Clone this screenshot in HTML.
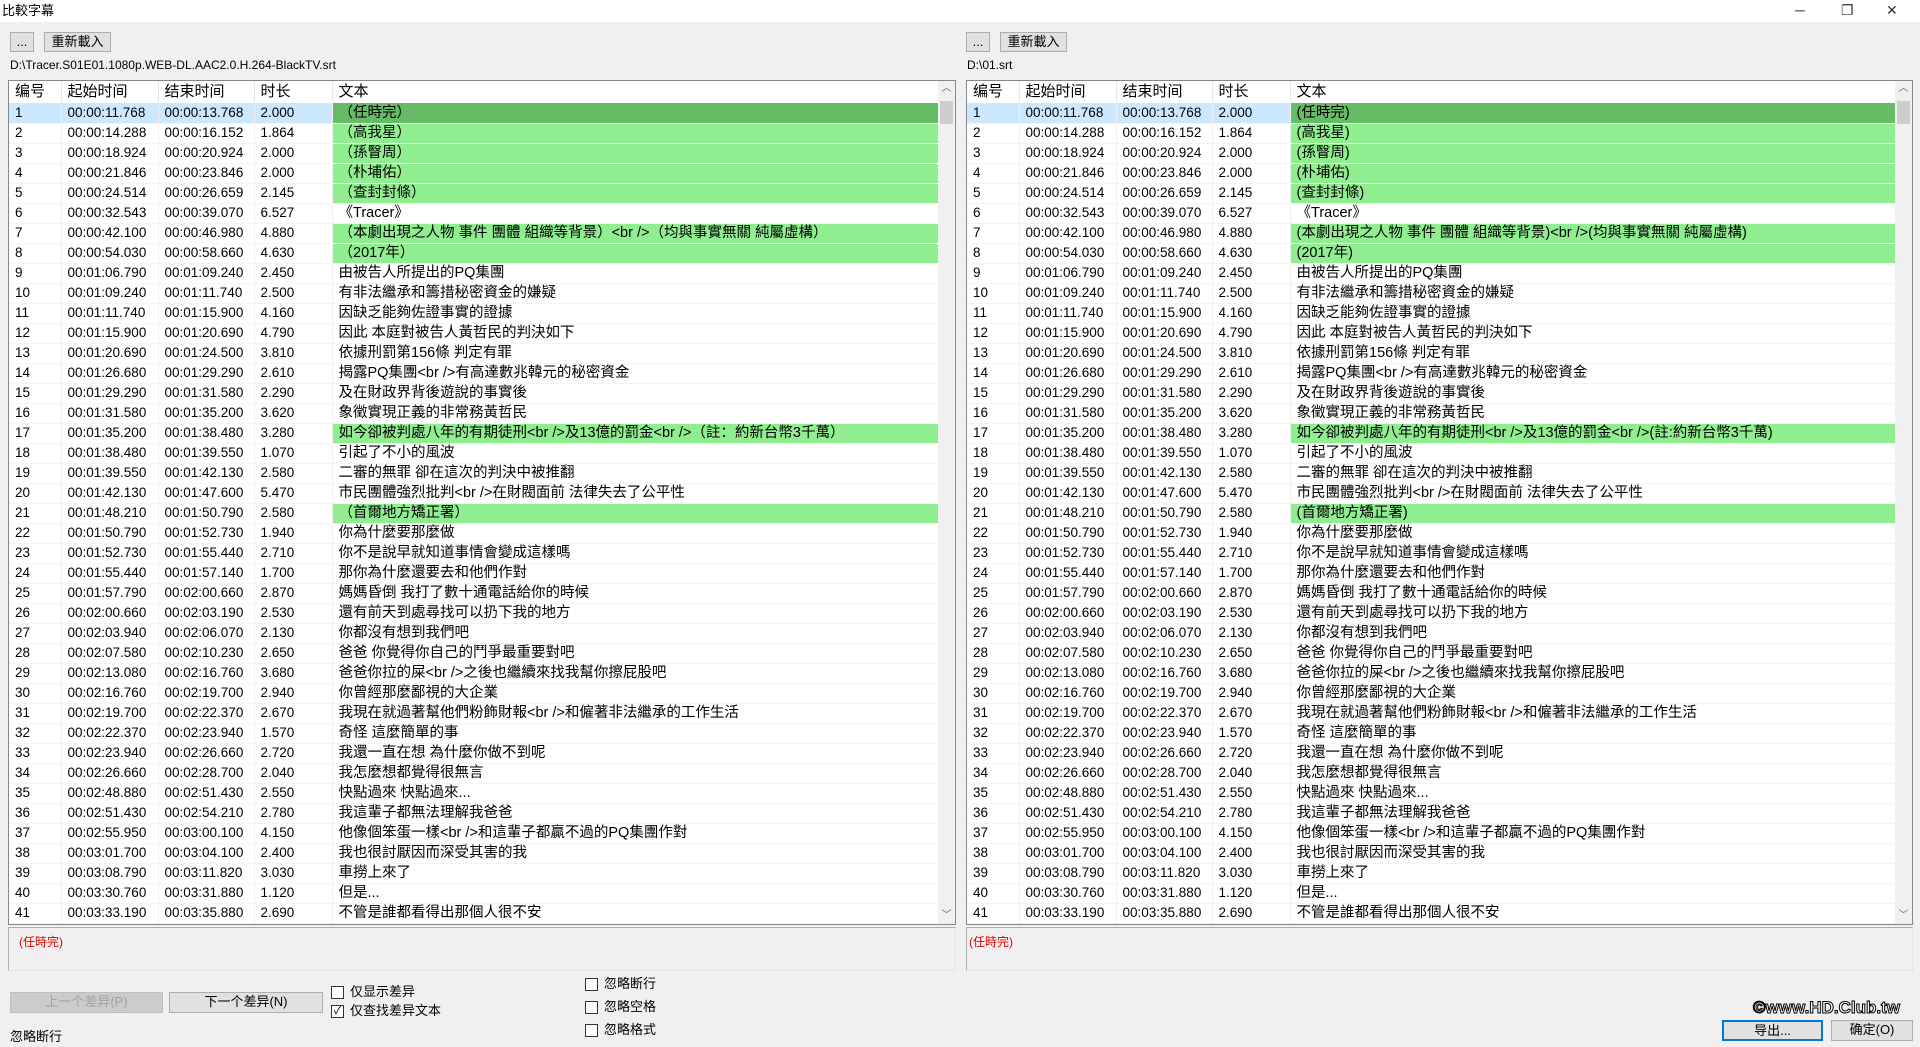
<!DOCTYPE html>
<html><head><meta charset="utf-8">
<style>
*{box-sizing:border-box;margin:0;padding:0}
body{width:1920px;height:1047px;background:#f0f0f0;font-family:"Liberation Sans","Noto Sans CJK SC",sans-serif;font-size:13px;line-height:16px;color:#000;position:relative;overflow:hidden}
.abs{position:absolute}
.title{left:0;top:0;width:1920px;height:22px;background:#fff;font-size:13px;padding:3px 0 0 2px}
.wc{top:2px;font-size:14px;color:#333}
.btn{background:#e1e1e1;border:1px solid #adadad;text-align:center;font-size:13px;line-height:18px}
.path{font-size:12px}
.tbl{background:#fff;border:1px solid #828790;overflow:hidden}
table{border-collapse:collapse;table-layout:fixed;position:absolute;left:0;top:0}
th{height:22px;line-height:20px;font-weight:normal;text-align:left;font-size:15px;padding:0 0 0 6px;border-right:1px solid #e5e5e5;background:#fff}
tr{height:20px}
td{height:20px;line-height:18px;padding:0 0 0 6px;white-space:nowrap;overflow:hidden;border-right:1px solid #f0f0f0;border-bottom:1px solid #f4f4f4;font-size:13.5px}
td:last-child{font-size:14.5px}
tr.s td{background:#cce8ff}
tr.s td:last-child{background:#66bb66}
tr.g td:last-child{background:#90ee90}
.sb{top:0;right:0;width:17px;height:100%;background:#f0f0f0}
.sb .th{position:absolute;left:2px;top:20px;width:13px;height:23px;background:#cdcdcd}
.box{background:#f0f0f0;border:1px solid #abadb3;border-right-color:#e3e3e3;border-bottom-color:#e3e3e3}
.red{color:#d00;font-size:12px}
.cb{width:13px;height:13px;border:1px solid #333;background:#fff;display:inline-block;vertical-align:middle;margin-right:6px;font-size:11px;line-height:11px;text-align:center}
.lbl{font-size:13px}
</style></head><body>
<div class="abs title">比較字幕</div>
<div class="abs wc" style="left:1795px">─</div>
<div class="abs wc" style="left:1841px">❐</div>
<div class="abs wc" style="left:1886px">✕</div>

<div class="abs btn" style="left:10px;top:32px;width:24px;height:20px">...</div>
<div class="abs btn" style="left:44px;top:32px;width:67px;height:20px">重新載入</div>
<div class="abs path" style="left:10px;top:57px">D:\Tracer.S01E01.1080p.WEB-DL.AAC2.0.H.264-BlackTV.srt</div>

<div class="abs btn" style="left:966px;top:32px;width:24px;height:20px">...</div>
<div class="abs btn" style="left:1000px;top:32px;width:67px;height:20px">重新載入</div>
<div class="abs path" style="left:967px;top:57px">D:\01.srt</div>

<div class="abs tbl" style="left:8px;top:80px;width:948px;height:845px">
<table style="width:930px"><colgroup><col style="width:52px"><col style="width:97px"><col style="width:96px"><col style="width:78px"><col style="width:607px"></colgroup>
<tr><th>编号</th><th>起始时间</th><th>结束时间</th><th>时长</th><th>文本</th></tr>
<tr class="s"><td>1</td><td>00:00:11.768</td><td>00:00:13.768</td><td>2.000</td><td>（任時完）</td></tr>
<tr class="g"><td>2</td><td>00:00:14.288</td><td>00:00:16.152</td><td>1.864</td><td>（高我星）</td></tr>
<tr class="g"><td>3</td><td>00:00:18.924</td><td>00:00:20.924</td><td>2.000</td><td>（孫瞖周）</td></tr>
<tr class="g"><td>4</td><td>00:00:21.846</td><td>00:00:23.846</td><td>2.000</td><td>（朴埔佑）</td></tr>
<tr class="g"><td>5</td><td>00:00:24.514</td><td>00:00:26.659</td><td>2.145</td><td>（查封封條）</td></tr>
<tr><td>6</td><td>00:00:32.543</td><td>00:00:39.070</td><td>6.527</td><td>《Tracer》</td></tr>
<tr class="g"><td>7</td><td>00:00:42.100</td><td>00:00:46.980</td><td>4.880</td><td>（本劇出現之人物 事件 團體 組織等背景）&lt;br /&gt;（均與事實無關 純屬虛構）</td></tr>
<tr class="g"><td>8</td><td>00:00:54.030</td><td>00:00:58.660</td><td>4.630</td><td>（2017年）</td></tr>
<tr><td>9</td><td>00:01:06.790</td><td>00:01:09.240</td><td>2.450</td><td>由被告人所提出的PQ集團</td></tr>
<tr><td>10</td><td>00:01:09.240</td><td>00:01:11.740</td><td>2.500</td><td>有非法繼承和籌措秘密資金的嫌疑</td></tr>
<tr><td>11</td><td>00:01:11.740</td><td>00:01:15.900</td><td>4.160</td><td>因缺乏能夠佐證事實的證據</td></tr>
<tr><td>12</td><td>00:01:15.900</td><td>00:01:20.690</td><td>4.790</td><td>因此 本庭對被告人黃哲民的判決如下</td></tr>
<tr><td>13</td><td>00:01:20.690</td><td>00:01:24.500</td><td>3.810</td><td>依據刑罰第156條 判定有罪</td></tr>
<tr><td>14</td><td>00:01:26.680</td><td>00:01:29.290</td><td>2.610</td><td>揭露PQ集團&lt;br /&gt;有高達數兆韓元的秘密資金</td></tr>
<tr><td>15</td><td>00:01:29.290</td><td>00:01:31.580</td><td>2.290</td><td>及在財政界背後遊說的事實後</td></tr>
<tr><td>16</td><td>00:01:31.580</td><td>00:01:35.200</td><td>3.620</td><td>象徵實現正義的非常務黃哲民</td></tr>
<tr class="g"><td>17</td><td>00:01:35.200</td><td>00:01:38.480</td><td>3.280</td><td>如今卻被判處八年的有期徒刑&lt;br /&gt;及13億的罰金&lt;br /&gt;（註：約新台幣3千萬）</td></tr>
<tr><td>18</td><td>00:01:38.480</td><td>00:01:39.550</td><td>1.070</td><td>引起了不小的風波</td></tr>
<tr><td>19</td><td>00:01:39.550</td><td>00:01:42.130</td><td>2.580</td><td>二審的無罪 卻在這次的判決中被推翻</td></tr>
<tr><td>20</td><td>00:01:42.130</td><td>00:01:47.600</td><td>5.470</td><td>市民團體強烈批判&lt;br /&gt;在財閥面前 法律失去了公平性</td></tr>
<tr class="g"><td>21</td><td>00:01:48.210</td><td>00:01:50.790</td><td>2.580</td><td>（首爾地方矯正署）</td></tr>
<tr><td>22</td><td>00:01:50.790</td><td>00:01:52.730</td><td>1.940</td><td>你為什麼要那麼做</td></tr>
<tr><td>23</td><td>00:01:52.730</td><td>00:01:55.440</td><td>2.710</td><td>你不是說早就知道事情會變成這樣嗎</td></tr>
<tr><td>24</td><td>00:01:55.440</td><td>00:01:57.140</td><td>1.700</td><td>那你為什麼還要去和他們作對</td></tr>
<tr><td>25</td><td>00:01:57.790</td><td>00:02:00.660</td><td>2.870</td><td>媽媽昏倒 我打了數十通電話給你的時候</td></tr>
<tr><td>26</td><td>00:02:00.660</td><td>00:02:03.190</td><td>2.530</td><td>還有前天到處尋找可以扔下我的地方</td></tr>
<tr><td>27</td><td>00:02:03.940</td><td>00:02:06.070</td><td>2.130</td><td>你都沒有想到我們吧</td></tr>
<tr><td>28</td><td>00:02:07.580</td><td>00:02:10.230</td><td>2.650</td><td>爸爸 你覺得你自己的鬥爭最重要對吧</td></tr>
<tr><td>29</td><td>00:02:13.080</td><td>00:02:16.760</td><td>3.680</td><td>爸爸你拉的屎&lt;br /&gt;之後也繼續來找我幫你擦屁股吧</td></tr>
<tr><td>30</td><td>00:02:16.760</td><td>00:02:19.700</td><td>2.940</td><td>你曾經那麼鄙視的大企業</td></tr>
<tr><td>31</td><td>00:02:19.700</td><td>00:02:22.370</td><td>2.670</td><td>我現在就過著幫他們粉飾財報&lt;br /&gt;和僱著非法繼承的工作生活</td></tr>
<tr><td>32</td><td>00:02:22.370</td><td>00:02:23.940</td><td>1.570</td><td>奇怪 這麼簡單的事</td></tr>
<tr><td>33</td><td>00:02:23.940</td><td>00:02:26.660</td><td>2.720</td><td>我還一直在想 為什麼你做不到呢</td></tr>
<tr><td>34</td><td>00:02:26.660</td><td>00:02:28.700</td><td>2.040</td><td>我怎麼想都覺得很無言</td></tr>
<tr><td>35</td><td>00:02:48.880</td><td>00:02:51.430</td><td>2.550</td><td>快點過來 快點過來...</td></tr>
<tr><td>36</td><td>00:02:51.430</td><td>00:02:54.210</td><td>2.780</td><td>我這輩子都無法理解我爸爸</td></tr>
<tr><td>37</td><td>00:02:55.950</td><td>00:03:00.100</td><td>4.150</td><td>他像個笨蛋一樣&lt;br /&gt;和這輩子都贏不過的PQ集團作對</td></tr>
<tr><td>38</td><td>00:03:01.700</td><td>00:03:04.100</td><td>2.400</td><td>我也很討厭因而深受其害的我</td></tr>
<tr><td>39</td><td>00:03:08.790</td><td>00:03:11.820</td><td>3.030</td><td>車撈上來了</td></tr>
<tr><td>40</td><td>00:03:30.760</td><td>00:03:31.880</td><td>1.120</td><td>但是...</td></tr>
<tr><td>41</td><td>00:03:33.190</td><td>00:03:35.880</td><td>2.690</td><td>不管是誰都看得出那個人很不安</td></tr>
</table>
<div class="abs sb"><div style="text-align:center;font-size:10px;color:#606060">︿</div><div class="th"></div><div style="position:absolute;bottom:0;width:17px;text-align:center;font-size:10px;color:#606060">﹀</div></div>
</div>

<div class="abs tbl" style="left:966px;top:80px;width:947px;height:845px">
<table style="width:929px"><colgroup><col style="width:52px"><col style="width:97px"><col style="width:96px"><col style="width:78px"><col style="width:606px"></colgroup>
<tr><th>编号</th><th>起始时间</th><th>结束时间</th><th>时长</th><th>文本</th></tr>
<tr class="s"><td>1</td><td>00:00:11.768</td><td>00:00:13.768</td><td>2.000</td><td>(任時完)</td></tr>
<tr class="g"><td>2</td><td>00:00:14.288</td><td>00:00:16.152</td><td>1.864</td><td>(高我星)</td></tr>
<tr class="g"><td>3</td><td>00:00:18.924</td><td>00:00:20.924</td><td>2.000</td><td>(孫瞖周)</td></tr>
<tr class="g"><td>4</td><td>00:00:21.846</td><td>00:00:23.846</td><td>2.000</td><td>(朴埔佑)</td></tr>
<tr class="g"><td>5</td><td>00:00:24.514</td><td>00:00:26.659</td><td>2.145</td><td>(查封封條)</td></tr>
<tr><td>6</td><td>00:00:32.543</td><td>00:00:39.070</td><td>6.527</td><td>《Tracer》</td></tr>
<tr class="g"><td>7</td><td>00:00:42.100</td><td>00:00:46.980</td><td>4.880</td><td>(本劇出現之人物 事件 團體 組織等背景)&lt;br /&gt;(均與事實無關 純屬虛構)</td></tr>
<tr class="g"><td>8</td><td>00:00:54.030</td><td>00:00:58.660</td><td>4.630</td><td>(2017年)</td></tr>
<tr><td>9</td><td>00:01:06.790</td><td>00:01:09.240</td><td>2.450</td><td>由被告人所提出的PQ集團</td></tr>
<tr><td>10</td><td>00:01:09.240</td><td>00:01:11.740</td><td>2.500</td><td>有非法繼承和籌措秘密資金的嫌疑</td></tr>
<tr><td>11</td><td>00:01:11.740</td><td>00:01:15.900</td><td>4.160</td><td>因缺乏能夠佐證事實的證據</td></tr>
<tr><td>12</td><td>00:01:15.900</td><td>00:01:20.690</td><td>4.790</td><td>因此 本庭對被告人黃哲民的判決如下</td></tr>
<tr><td>13</td><td>00:01:20.690</td><td>00:01:24.500</td><td>3.810</td><td>依據刑罰第156條 判定有罪</td></tr>
<tr><td>14</td><td>00:01:26.680</td><td>00:01:29.290</td><td>2.610</td><td>揭露PQ集團&lt;br /&gt;有高達數兆韓元的秘密資金</td></tr>
<tr><td>15</td><td>00:01:29.290</td><td>00:01:31.580</td><td>2.290</td><td>及在財政界背後遊說的事實後</td></tr>
<tr><td>16</td><td>00:01:31.580</td><td>00:01:35.200</td><td>3.620</td><td>象徵實現正義的非常務黃哲民</td></tr>
<tr class="g"><td>17</td><td>00:01:35.200</td><td>00:01:38.480</td><td>3.280</td><td>如今卻被判處八年的有期徒刑&lt;br /&gt;及13億的罰金&lt;br /&gt;(註:約新台幣3千萬)</td></tr>
<tr><td>18</td><td>00:01:38.480</td><td>00:01:39.550</td><td>1.070</td><td>引起了不小的風波</td></tr>
<tr><td>19</td><td>00:01:39.550</td><td>00:01:42.130</td><td>2.580</td><td>二審的無罪 卻在這次的判決中被推翻</td></tr>
<tr><td>20</td><td>00:01:42.130</td><td>00:01:47.600</td><td>5.470</td><td>市民團體強烈批判&lt;br /&gt;在財閥面前 法律失去了公平性</td></tr>
<tr class="g"><td>21</td><td>00:01:48.210</td><td>00:01:50.790</td><td>2.580</td><td>(首爾地方矯正署)</td></tr>
<tr><td>22</td><td>00:01:50.790</td><td>00:01:52.730</td><td>1.940</td><td>你為什麼要那麼做</td></tr>
<tr><td>23</td><td>00:01:52.730</td><td>00:01:55.440</td><td>2.710</td><td>你不是說早就知道事情會變成這樣嗎</td></tr>
<tr><td>24</td><td>00:01:55.440</td><td>00:01:57.140</td><td>1.700</td><td>那你為什麼還要去和他們作對</td></tr>
<tr><td>25</td><td>00:01:57.790</td><td>00:02:00.660</td><td>2.870</td><td>媽媽昏倒 我打了數十通電話給你的時候</td></tr>
<tr><td>26</td><td>00:02:00.660</td><td>00:02:03.190</td><td>2.530</td><td>還有前天到處尋找可以扔下我的地方</td></tr>
<tr><td>27</td><td>00:02:03.940</td><td>00:02:06.070</td><td>2.130</td><td>你都沒有想到我們吧</td></tr>
<tr><td>28</td><td>00:02:07.580</td><td>00:02:10.230</td><td>2.650</td><td>爸爸 你覺得你自己的鬥爭最重要對吧</td></tr>
<tr><td>29</td><td>00:02:13.080</td><td>00:02:16.760</td><td>3.680</td><td>爸爸你拉的屎&lt;br /&gt;之後也繼續來找我幫你擦屁股吧</td></tr>
<tr><td>30</td><td>00:02:16.760</td><td>00:02:19.700</td><td>2.940</td><td>你曾經那麼鄙視的大企業</td></tr>
<tr><td>31</td><td>00:02:19.700</td><td>00:02:22.370</td><td>2.670</td><td>我現在就過著幫他們粉飾財報&lt;br /&gt;和僱著非法繼承的工作生活</td></tr>
<tr><td>32</td><td>00:02:22.370</td><td>00:02:23.940</td><td>1.570</td><td>奇怪 這麼簡單的事</td></tr>
<tr><td>33</td><td>00:02:23.940</td><td>00:02:26.660</td><td>2.720</td><td>我還一直在想 為什麼你做不到呢</td></tr>
<tr><td>34</td><td>00:02:26.660</td><td>00:02:28.700</td><td>2.040</td><td>我怎麼想都覺得很無言</td></tr>
<tr><td>35</td><td>00:02:48.880</td><td>00:02:51.430</td><td>2.550</td><td>快點過來 快點過來...</td></tr>
<tr><td>36</td><td>00:02:51.430</td><td>00:02:54.210</td><td>2.780</td><td>我這輩子都無法理解我爸爸</td></tr>
<tr><td>37</td><td>00:02:55.950</td><td>00:03:00.100</td><td>4.150</td><td>他像個笨蛋一樣&lt;br /&gt;和這輩子都贏不過的PQ集團作對</td></tr>
<tr><td>38</td><td>00:03:01.700</td><td>00:03:04.100</td><td>2.400</td><td>我也很討厭因而深受其害的我</td></tr>
<tr><td>39</td><td>00:03:08.790</td><td>00:03:11.820</td><td>3.030</td><td>車撈上來了</td></tr>
<tr><td>40</td><td>00:03:30.760</td><td>00:03:31.880</td><td>1.120</td><td>但是...</td></tr>
<tr><td>41</td><td>00:03:33.190</td><td>00:03:35.880</td><td>2.690</td><td>不管是誰都看得出那個人很不安</td></tr>
</table>
<div class="abs sb"><div style="text-align:center;font-size:10px;color:#606060">︿</div><div class="th"></div><div style="position:absolute;bottom:0;width:17px;text-align:center;font-size:10px;color:#606060">﹀</div></div>
</div>

<div class="abs box" style="left:8px;top:927px;width:948px;height:44px;padding:6px 0 0 10px"><span class="red">(任時完)</span></div>
<div class="abs box" style="left:966px;top:927px;width:947px;height:44px;padding:6px 0 0 2px"><span class="red">(任時完)</span></div>

<div class="abs btn" style="left:10px;top:992px;width:153px;height:21px;color:#a0a0a0;background:#ccc;border-color:#bfbfbf">上一个差异(P)</div>
<div class="abs btn" style="left:169px;top:992px;width:154px;height:21px">下一个差异(N)</div>
<div class="abs lbl" style="left:331px;top:984px"><span class="cb"></span>仅显示差异</div>
<div class="abs lbl" style="left:331px;top:1003px"><span class="cb">✓</span>仅查找差异文本</div>
<div class="abs lbl" style="left:585px;top:976px"><span class="cb"></span>忽略断行</div>
<div class="abs lbl" style="left:585px;top:999px"><span class="cb"></span>忽略空格</div>
<div class="abs lbl" style="left:585px;top:1022px"><span class="cb"></span>忽略格式</div>
<div class="abs lbl" style="left:10px;top:1029px">忽略断行</div>

<div class="abs" style="left:1753px;top:1000px;font-size:17px;font-weight:bold;color:#fff;-webkit-text-stroke:1px #000">©www.HD.Club.tw</div>
<div class="abs btn" style="left:1722px;top:1020px;width:101px;height:21px;border:2px solid #0078d7">导出...</div>
<div class="abs btn" style="left:1831px;top:1020px;width:82px;height:21px">确定(O)</div>
</body></html>
